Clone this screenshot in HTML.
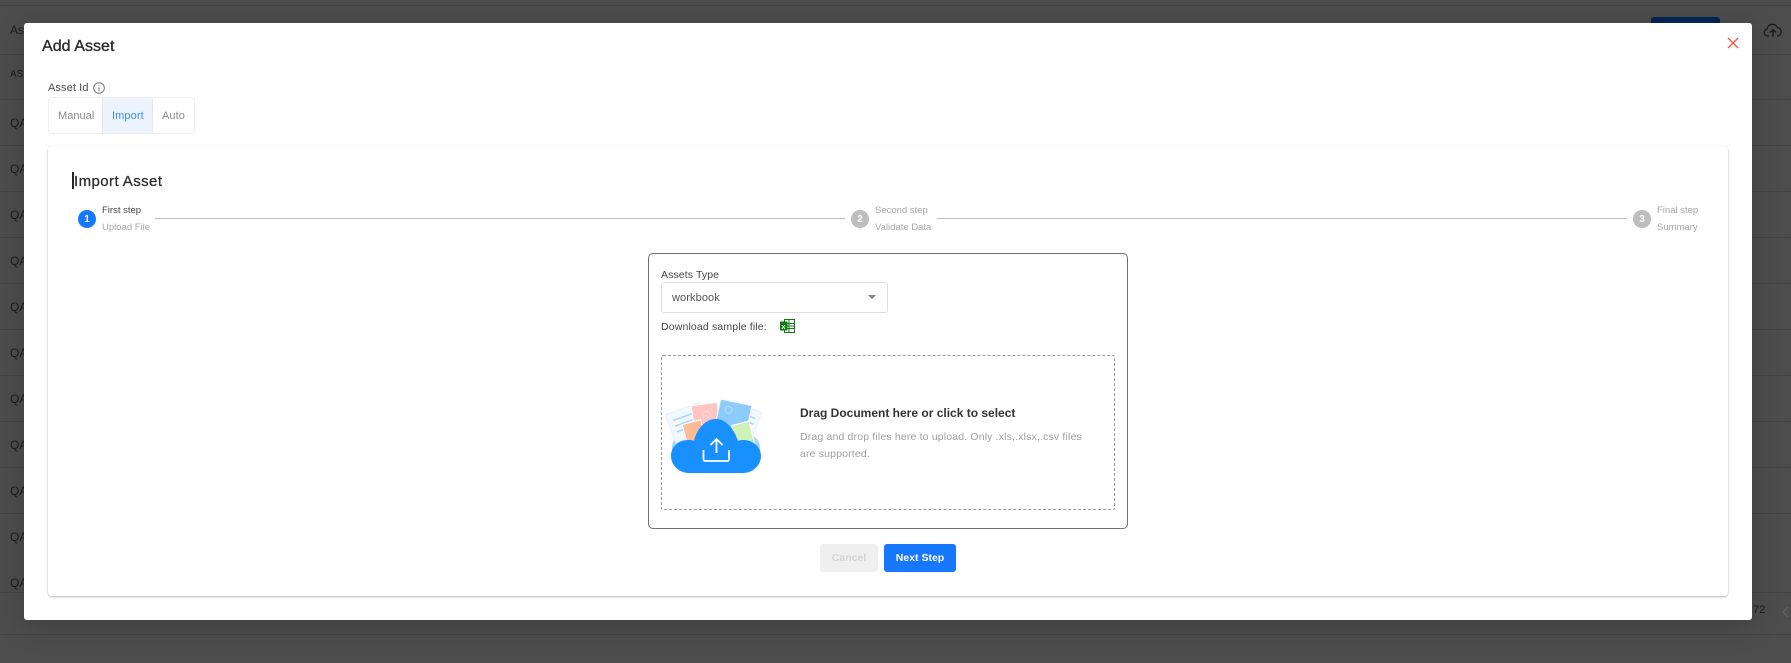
<!DOCTYPE html>
<html><head><meta charset="utf-8">
<style>
*{box-sizing:border-box;margin:0;padding:0}
html,body{width:1791px;height:663px;overflow:hidden;background:#4d4d4d;font-family:"Liberation Sans",sans-serif}
.a{position:absolute;white-space:nowrap}
.bgline{position:absolute;left:0;width:1791px;height:1px;background:#444}
.bgt{position:absolute;left:10px;color:#1c1c1c;font-size:12px}
.t{position:absolute;white-space:nowrap;line-height:14px}
.c{position:absolute;width:18px;height:18px;border-radius:50%;background:#bdbdbd;color:#fff;font-size:10px;font-weight:bold;text-align:center;line-height:19px}
.l{position:absolute;height:1px;background:#bdbdbd;top:218px}
</style></head><body>
<div class="bgline" style="top:5px"></div>
<div class="bgline" style="top:54px"></div>
<div class="bgline" style="top:99px"></div>
<div class="bgline" style="top:145px"></div>
<div class="bgline" style="top:191px"></div>
<div class="bgline" style="top:237px"></div>
<div class="bgline" style="top:283px"></div>
<div class="bgline" style="top:329px"></div>
<div class="bgline" style="top:375px"></div>
<div class="bgline" style="top:421px"></div>
<div class="bgline" style="top:467px"></div>
<div class="bgline" style="top:513px"></div>
<div class="bgline" style="top:592px"></div>
<div class="bgline" style="top:634px"></div>
<div class="bgt" style="top:23px">As</div>
<div class="bgt" style="top:69px;font-size:10px">AS</div>
<div class="bgt" style="top:116px">QA</div>
<div class="bgt" style="top:162px">QA</div>
<div class="bgt" style="top:208px">QA</div>
<div class="bgt" style="top:254px">QA</div>
<div class="bgt" style="top:300px">QA</div>
<div class="bgt" style="top:346px">QA</div>
<div class="bgt" style="top:392px">QA</div>
<div class="bgt" style="top:438px">QA</div>
<div class="bgt" style="top:484px">QA</div>
<div class="bgt" style="top:530px">QA</div>
<div class="bgt" style="top:576px">QA</div>
<div class="a" style="left:1651px;top:17px;width:69px;height:10px;background:#062554;border-radius:3px"></div>
<svg class="a" style="left:1763px;top:22px" width="20" height="16" viewBox="0 0 20 16" fill="none" stroke="#1d1d1d" stroke-width="1.4"><path d="M6 14H4.500A3.500 3.500 0 0 1 4 7.100 5.500 5.500 0 0 1 14.500 5.600 4.300 4.300 0 0 1 15 14H14M10 15V8M7 10.500 10 7.500 13 10.500"/></svg>
<div class="bgt" style="left:1753px;top:604px;font-size:11px">72</div>
<svg class="a" style="left:1782px;top:606px" width="8" height="12" fill="none" stroke="#606060" stroke-width="1.5"><path d="M6 1 1 6 6 11"/></svg>

<div class="a" style="left:24px;top:23px;width:1728px;height:597px;background:#fff;border-radius:3px;box-shadow:0 6px 30px rgba(0,0,0,.18)"></div>
<div class="t" style="left:42px;top:37px;font-size:16px;line-height:19px;color:#2a2a2a;letter-spacing:.05px;-webkit-text-stroke:.35px #2a2a2a">Add Asset</div>
<svg class="a" style="left:1727px;top:37px" width="12" height="12" fill="none" stroke="#ff4d4f" stroke-width="1.3"><path d="M1 1 11 11M11 1 1 11"/></svg>

<div class="t" style="left:48px;top:81px;font-size:11px;color:#4a4a4a;letter-spacing:.1px">Asset Id</div>
<svg class="a" style="left:93px;top:82px" width="12" height="12" fill="none" stroke="#777"><circle cx="6" cy="6" r="5.300"/><path d="M6 5.200V9M6 3V4"/></svg>
<div class="a" style="left:48px;top:97px;width:147px;height:37px;border:1px solid #eeeeee;border-radius:4px"></div>
<div class="a" style="left:102px;top:98px;width:51px;height:35px;background:#ecf3fd;border-left:1px solid #e8e8e8;border-right:1px solid #e8e8e8"></div>
<div class="t" style="left:58px;top:109px;font-size:11px;color:#8a8a8a;letter-spacing:.05px">Manual</div>
<div class="t" style="left:112px;top:109px;font-size:11px;color:#3d8bff;letter-spacing:.1px">Import</div>
<div class="t" style="left:162px;top:109px;font-size:11px;color:#8a8a8a;letter-spacing:.1px">Auto</div>

<div class="a" style="left:48px;top:146px;width:1680px;height:450px;background:#fff;border-radius:4px;box-shadow:0 1px 2px rgba(0,0,0,.28),0 0 1px rgba(0,0,0,.07)"></div>
<div class="a" style="left:72px;top:172px;width:2px;height:17px;background:#26262b"></div>
<div class="t" style="left:74px;top:173px;font-size:15px;line-height:18px;color:#2a2a2a;letter-spacing:.42px;-webkit-text-stroke:.25px #2a2a2a">Import Asset</div>

<div class="c" style="left:78px;top:210px;background:#1677ff">1</div>
<div class="t" style="left:102px;top:204px;font-size:9.500px;color:#444">First step</div>
<div class="t" style="left:102px;top:221px;font-size:9.500px;color:#a5a5a5">Upload File</div>
<div class="l" style="left:155px;width:690px"></div>
<div class="c" style="left:851px;top:210px">2</div>
<div class="t" style="left:875px;top:204px;font-size:9.500px;color:#a5a5a5">Second step</div>
<div class="t" style="left:875px;top:221px;font-size:9.500px;color:#a5a5a5">Validate Data</div>
<div class="l" style="left:937px;width:690px"></div>
<div class="c" style="left:1633px;top:210px">3</div>
<div class="t" style="left:1657px;top:204px;font-size:9.500px;color:#a5a5a5">Final step</div>
<div class="t" style="left:1657px;top:221px;font-size:9.500px;color:#a5a5a5">Summary</div>

<div class="a" style="left:648px;top:253px;width:480px;height:276px;border:1px solid #6a717c;border-radius:5px"></div>
<div class="t" style="left:661px;top:268px;font-size:10.500px;color:#444;letter-spacing:.1px">Assets Type</div>
<div class="a" style="left:661px;top:282px;width:227px;height:31px;border:1px solid #dedede;border-radius:3px"></div>
<div class="t" style="left:672px;top:291px;font-size:11px;color:#555;letter-spacing:.1px">workbook</div>
<div class="a" style="left:868px;top:295px;border-left:4.500px solid transparent;border-right:4.500px solid transparent;border-top:4.500px solid #808080"></div>
<div class="t" style="left:661px;top:320px;font-size:10.500px;color:#444;letter-spacing:.15px">Download sample file:</div>
<svg class="a" style="left:780px;top:319px" width="15" height="14" viewBox="0 0 15 14"><rect x="4.500" y=".5" width="10" height="13" fill="#fff" stroke="#107c10"/><path d="M4.500 4.500H14.500M4.500 7H14.500M4.500 9.500H14.500M9 .5V13.500" stroke="#107c10" fill="none"/><rect x="0" y="2.500" width="7.500" height="9" fill="#107c10"/><text x="1.400" y="10" font-size="7.500" font-weight="bold" fill="#fff" font-family="Liberation Sans">x</text></svg>
<div class="a" style="left:661px;top:355px;width:454px;height:155px;border:1px dashed #999;border-radius:2px"></div>

<svg class="a" style="left:665px;top:395px" width="105" height="85" viewBox="0 0 105 85">
<rect x="7" y="40" width="88" height="30" rx="12" fill="#a6d5fd"/>
<g transform="translate(2 1)">
<g transform="rotate(-20 20 28)"><rect x="3" y="12" width="36" height="30" fill="#f1f8ff" stroke="#e3effa"/><path d="M8 20H32M8 26H32M8 32H26" stroke="#a8d6fb" stroke-width="1.500"/></g>
<g transform="rotate(20 80 28)"><rect x="62" y="12" width="28" height="34" fill="#f1f8ff" stroke="#e3effa"/><path d="M68 20H86M68 26H86M68 32H86" stroke="#a8d6fb" stroke-width="1.500"/></g>
<g transform="rotate(-8 38 22)"><rect x="26" y="8" width="26" height="28" fill="#ffc5c5" stroke="#fff"/><circle cx="40" cy="19" r="3.500" fill="none" stroke="#ffdada"/></g>
<g transform="rotate(12 66 22)"><rect x="50" y="6" width="32" height="36" fill="#8ecbfd" stroke="#fff"/><circle cx="60" cy="15" r="3.500" fill="none" stroke="#b6ddfd"/></g>
<g transform="rotate(-15 26 34)"><rect x="17" y="26" width="19" height="24" fill="#ffbb96" stroke="#fff"/></g>
<g transform="rotate(-14 76 38)"><rect x="67" y="27" width="18" height="24" fill="#cdf1b8" stroke="#fff"/></g>
</g>
<path d="M24 78H78C88 78 96 70 96 61 96 52 88 45 79 45 77 45 75 45 73 46 69 33 60 24 51 24 41 24 32 33 29 46 27 45 25 45 23 45 13 45 6 52 6 61 6 70 14 78 24 78Z" fill="#1890ff"/>
<path d="M38.500 55V64.500A1.500 1.500 0 0 0 40 66H62.500A1.500 1.500 0 0 0 64 64.500V55M51.500 58V44M45.500 50 51.500 44 57.500 50" fill="none" stroke="#fff" stroke-width="1.800"/>
</svg>

<div class="t" style="left:800px;top:406px;font-size:12px;font-weight:bold;color:#333">Drag Document here or click to select</div>
<div class="t" style="left:800px;top:430px;font-size:10.500px;color:#a0a0a0;letter-spacing:.16px">Drag and drop files here to upload. Only .xls,.xlsx,.csv files</div>
<div class="t" style="left:800px;top:447px;font-size:10.500px;color:#a0a0a0;letter-spacing:.16px">are supported.</div>

<div class="a" style="left:820px;top:544px;width:58px;height:28px;background:#efefef;border-radius:3px;color:#d4d4d4;font-size:10.500px;font-weight:bold;text-align:center;line-height:29px">Cancel</div>
<div class="a" style="left:884px;top:544px;width:72px;height:28px;background:#1677ff;border-radius:3px;color:#fff;font-size:10.500px;font-weight:bold;text-align:center;line-height:29px">Next Step</div>
</body></html>
